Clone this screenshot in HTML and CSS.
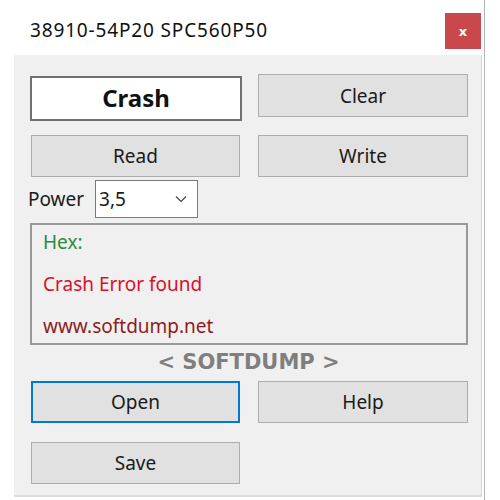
FILE: index.html
```html
<!DOCTYPE html>
<html lang="en">
<head>
  <meta charset="UTF-8" />
  <title>38910-54P20 SPC560P50</title>
  <link rel="stylesheet" href="styles.css">
</head>
<body>

  <div class="window">
    <!-- Title bar -->
    <div class="titlebar">
      <span class="title">38910-54P20 SPC560P50</span>
      <button class="close">x</button>
    </div>

    <!-- Dialog body -->
    <div class="client">
      <div class="row row-top">
        <div class="status">Crash</div>
        <button class="btn">Clear</button>
      </div>

      <div class="row row-rw">
        <button class="btn">Read</button>
        <button class="btn">Write</button>
      </div>

      <div class="power">
        <label class="power-label">Power</label>
        <div class="select">
          <span>3,5</span>
          <svg width="12" height="8" viewBox="0 0 12 8">
            <polyline points="1,1.5 6,6.5 11,1.5" fill="none" stroke="#444" stroke-width="1.2" />
          </svg>
        </div>
      </div>

      <div class="log">
        <p class="hex">Hex:</p>
        <p class="err">Crash Error found</p>
        <p class="url">www.softdump.net</p>
      </div>

      <div class="brand">&lt; SOFTDUMP &gt;</div>

      <div class="row row-open">
        <button class="btn focused">Open</button>
        <button class="btn">Help</button>
      </div>

      <div class="row row-save">
        <button class="btn">Save</button>
      </div>
    </div>
  </div>

</body>
</html>
```

FILE: styles.css
```css
* {
  margin: 0;
  padding: 0;
  box-sizing: border-box;
}

body {
  background: #fff;
  font-family: "Noto Sans", "Open Sans", sans-serif;
  color: #1a1a1a;
}

.window {
  width: 485px;
  height: 500px;
  background: #fff;
  border-right: 1px solid #b4b4b4;
}

/* title bar */
.titlebar {
  height: 55px;
  display: flex;
  justify-content: space-between;
  align-items: flex-start;
  padding: 0 3px 0 30px;
}

.title {
  font-size: 19px;
  letter-spacing: 0.85px;
  margin-top: 17px;
  color: #111;
}

.close {
  width: 36px;
  height: 36px;
  margin-top: 13px;
  border: none;
  background: #c9484c;
  color: #fff;
  font-family: "DejaVu Sans", sans-serif;
  font-weight: bold;
  font-size: 13px;
}

/* body */
.client {
  width: 468px;
  height: 442px;
  margin-left: 14px;
  background: #f0f0f0;
  padding: 19px 14px 0 16px;
  border-bottom: 2px solid #dcdcdc;
  border-right: 1px solid #d6d6d6;
}

.row {
  display: grid;
  grid-template-columns: 212px 210px;
  column-gap: 16px;
  align-items: start;
}

.btn {
  height: 42px;
  background: #e1e1e1;
  border: 1px solid #adadad;
  font-family: "Noto Sans", "Open Sans", sans-serif;
  font-size: 19px;
  color: #1a1a1a;
}

.row .btn:first-child {
  width: 209px;
  margin-left: 1px;
}

.btn.focused {
  border: 2px solid #0078d7;
}

.row-top .btn {
  height: 43px;
}

.status {
  height: 45px;
  margin-top: 2px;
  background: #fff;
  border: 2px solid #707070;
  display: flex;
  align-items: center;
  justify-content: center;
  padding-bottom: 3px;
  font-weight: bold;
  font-size: 24px;
  color: #111;
}

.row-rw {
  margin-top: 14px;
}

.power {
  margin-top: 3px;
  display: flex;
  align-items: center;
  gap: 11px;
}

.power-label {
  font-size: 19px;
  margin-left: -2px;
}

.select {
  width: 103px;
  height: 38px;
  background: #fff;
  border: 1px solid #7a7a7a;
  display: flex;
  align-items: center;
  justify-content: space-between;
  padding: 0 10px 0 3px;
  font-size: 19px;
}

.log {
  width: 438px;
  height: 122px;
  margin-top: 5px;
  border: 2px solid #9a9a9a;
  padding: 4px 0 0 11px;
  font-size: 19px;
}

.log p {
  height: 42px;
  line-height: 26px;
}

.hex { color: #2b8a3e; }
.err { color: #d8102a; }
.url { color: #8e1c1c; }

.brand {
  height: 36px;
  text-align: center;
  font-family: "DejaVu Sans", sans-serif;
  font-weight: bold;
  font-size: 21px;
  color: #7f7f7f;
  line-height: 34px;
}

.row-save {
  margin-top: 19px;
}
```
